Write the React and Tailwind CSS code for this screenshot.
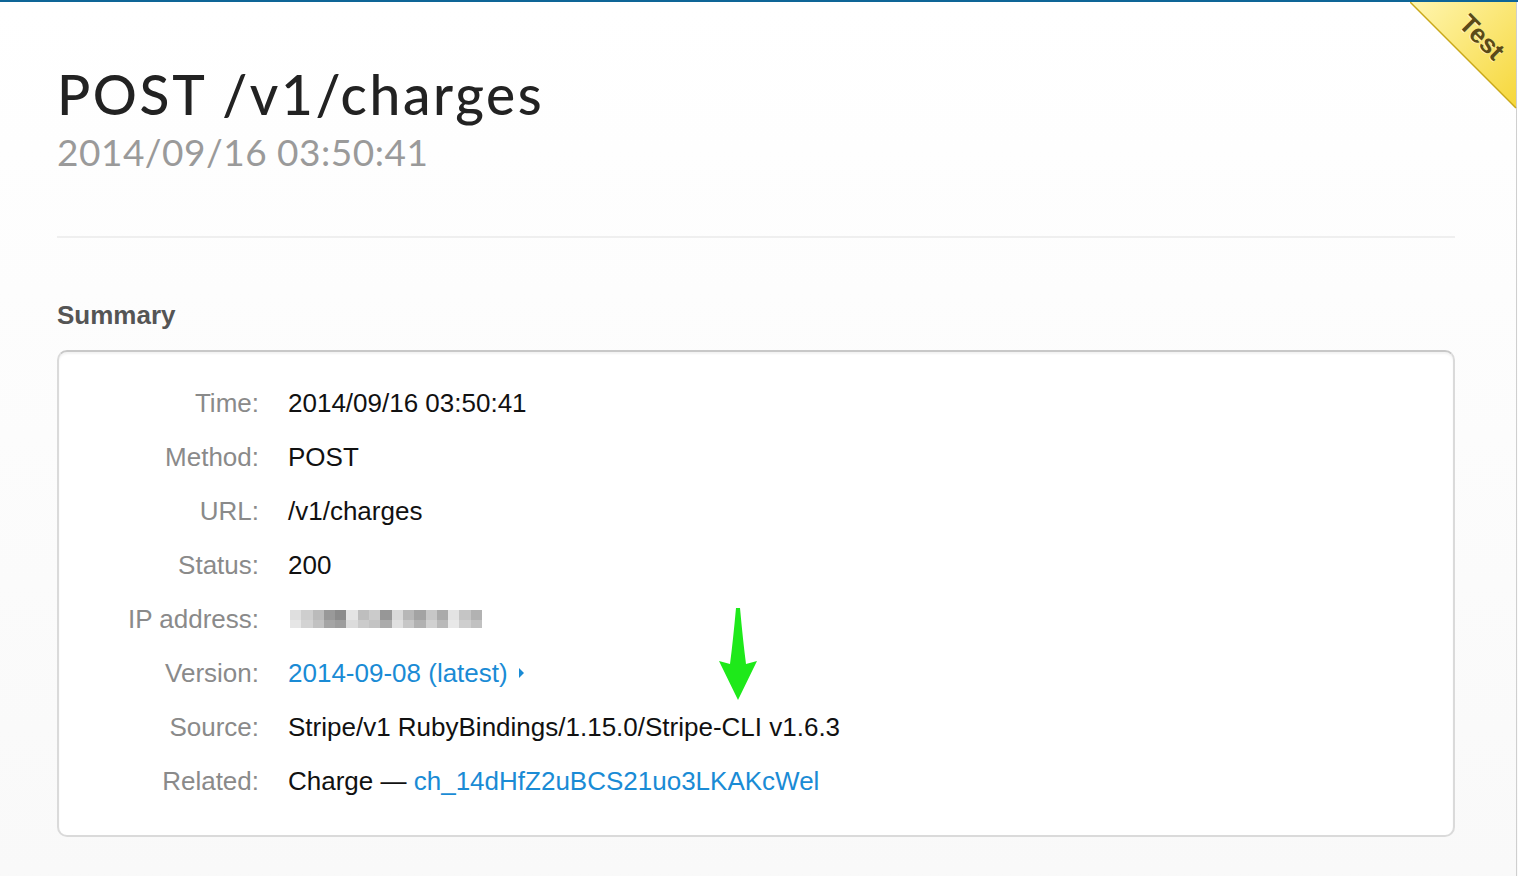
import React from 'react';

const rows = [
    { label: 'Time:', value: '2014/09/16 03:50:41' },
    { label: 'Method:', value: 'POST' },
    { label: 'URL:', value: '/v1/charges' },
    { label: 'Status:', value: '200' },
    { label: 'IP address:', blurred: true },
    { label: 'Version:', version: true },
    { label: 'Source:', value: 'Stripe/v1 RubyBindings/1.15.0/Stripe-CLI v1.6.3' },
    { label: 'Related:', related: true },
];

const blurTop = ['#dcdcdc', '#c9c9c9', '#b4b4b4', '#8e8e8e', '#7f7f7f', '#e2e2e2', '#b8b8b8', '#c6c6c6', '#8c8c8c', '#d5d5d5', '#b0b0b0', '#9a9a9a', '#c2c2c2', '#a1a1a1', '#e0e0e0', '#bfbfbf', '#aaaaaa'];
const blurBottom = ['#e4e4e4', '#cfcfcf', '#bcbcbc', '#9c9c9c', '#939393', '#d9d9d9', '#c6c6c6', '#bdbdbd', '#a3a3a3', '#dddddd', '#c1c1c1', '#a9a9a9', '#cdcdcd', '#b2b2b2', '#e6e6e6', '#c9c9c9', '#bbbbbb'];

function TestRibbon() {
    return (
        <div className="pointer-events-none absolute right-0 top-0 h-[108px] w-[108px] overflow-hidden">
            <svg width="108" height="108" viewBox="0 0 108 108" className="absolute inset-0">
                <defs>
                    <linearGradient id="rib" x1="0" y1="0" x2="1" y2="1">
                        <stop offset="0" stopColor="#fff6b0" />
                        <stop offset="1" stopColor="#f6d73a" />
                    </linearGradient>
                </defs>
                <polygon points="0,0 106,0 106,106" fill="url(#rib)" />
                <line x1="0" y1="0" x2="106" y2="106" stroke="#c9a819" strokeWidth="1.5" />
            </svg>
            <span
                className="absolute left-[46px] top-[16px] rotate-45 text-[26px] font-bold text-[#5b4a17]"
                style={{ fontFamily: '"Liberation Sans", Arial, sans-serif', textShadow: '0 1px 0 rgba(255,255,255,0.6)' }}
            >
                Test
            </span>
        </div>
    );
}

export default function App() {
    return (
        <div className="relative h-[876px] w-[1518px] overflow-hidden border-t-2 border-[#0e6597] bg-gradient-to-b from-white to-[#f9f9f9]">
            <div className="h-full w-[1517px] border-r border-[#cfcfcf] pl-[57px] pr-[61px]">
                <div className="pt-[60px]">
                    <h1 className="text-[55px] font-medium leading-[64px] text-[#222]" style={{ fontFamily: 'Lato, "Open Sans", sans-serif', letterSpacing: '2.6px' }}>
                        POST /v1/charges
                    </h1>
                    <div className="text-[37px] leading-[52px] text-[#9a9a9a]" style={{ fontFamily: 'Lato, "Open Sans", sans-serif', letterSpacing: '0.5px' }}>
                        2014/09/16 03:50:41
                    </div>
                </div>

                <div className="mt-[58px] h-[2px] bg-[#efefef]" />

                <h2 className="mt-[62px] text-[26px] font-bold leading-[30px] text-[#555]" style={{ fontFamily: '"Liberation Sans", Arial, sans-serif' }}>
                    Summary
                </h2>

                <div
                    className="mt-[20px] rounded-[10px] border-2 border-[#dadada] border-t-[#c8c8c8] bg-white pb-[27px] pt-[24px] shadow-[inset_0_2px_2px_rgba(0,0,0,0.05)]"
                    style={{ fontFamily: '"Liberation Sans", Arial, sans-serif' }}
                >
                    {rows.map((row) => (
                        <div key={row.label} className="flex h-[54px] items-center text-[26px]">
                            <div className="w-[200px] text-right text-[#8a8a8a]">{row.label}</div>
                            <div className="ml-[29px] text-[#111]">
                                {row.blurred ? (
                                    <div className="ml-[2px] flex flex-col opacity-90">
                                        <div className="flex">
                                            {blurTop.map((c, i) => (
                                                <div key={i} className="h-[10px] w-[11.3px]" style={{ backgroundColor: c }} />
                                            ))}
                                        </div>
                                        <div className="flex">
                                            {blurBottom.map((c, i) => (
                                                <div key={i} className="h-[8px] w-[11.3px]" style={{ backgroundColor: c }} />
                                            ))}
                                        </div>
                                    </div>
                                ) : row.version ? (
                                    <span className="flex items-center text-[#1a8bd5]">
                                        2014-09-08 (latest)
                                        <svg width="8" height="12" viewBox="0 0 8 12" className="ml-[10px]">
                                            <polygon points="1,1 6,6 1,11" fill="#1a8bd5" />
                                        </svg>
                                    </span>
                                ) : row.related ? (
                                    <span>
                                        Charge — <span className="text-[#1a8bd5]">ch_14dHfZ2uBCS21uo3LKAKcWel</span>
                                    </span>
                                ) : (
                                    row.value
                                )}
                            </div>
                        </div>
                    ))}
                </div>
            </div>

            <svg width="40" height="96" viewBox="0 0 40 96" className="absolute left-[718px] top-[605px]">
                <path d="M18 1 L22 1 Q25 34 28 57 L39 54 L20 93 L1 54 L12 57 Q15 34 18 1 Z" fill="#1ee91a" />
            </svg>

            <TestRibbon />
        </div>
    );
}
